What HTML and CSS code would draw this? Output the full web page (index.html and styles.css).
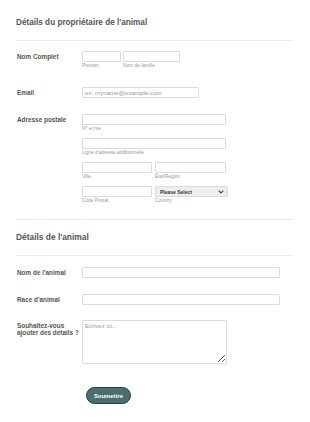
FILE: index.html
```html
<!DOCTYPE html>
<html lang="fr">
<head>
    <meta charset="UTF-8">
    <meta name="viewport" content="width=device-width, initial-scale=1.0">
    <title>Détails de l'animal</title>
    <link rel="stylesheet" href="styles.css">
</head>
<body>
    <form class="form-page">
        <div class="section-head">
            <h2>Détails du propriétaire de l'animal</h2>
        </div>

        <div class="row row-name">
            <label class="field-label">Nom Complet</label>
            <div class="fields">
                <div class="sub sub-first">
                    <input type="text">
                    <span class="sublabel">Prénom</span>
                </div>
                <div class="sub sub-last">
                    <input type="text">
                    <span class="sublabel">Nom de famille</span>
                </div>
            </div>
        </div>

        <div class="row row-email">
            <label class="field-label">Email</label>
            <input type="email" class="input-email" placeholder="ex: myname@example.com">
        </div>

        <div class="row row-address">
            <label class="field-label">Adresse postale</label>
            <div class="address">
                <div class="sub sub-full">
                    <input type="text">
                    <span class="sublabel">N° et rue</span>
                </div>
                <div class="sub sub-full">
                    <input type="text">
                    <span class="sublabel">Ligne d'adresse additionnelle</span>
                </div>
                <div class="fields">
                    <div class="sub sub-half">
                        <input type="text">
                        <span class="sublabel">Ville</span>
                    </div>
                    <div class="sub sub-half2">
                        <input type="text">
                        <span class="sublabel">État/Région</span>
                    </div>
                </div>
                <div class="fields">
                    <div class="sub sub-half">
                        <input type="text">
                        <span class="sublabel">Code Postal</span>
                    </div>
                    <div class="sub sub-select">
                        <div class="select-wrap">
                            <select>
                                <option>Please Select</option>
                            </select>
                            <svg class="chevron" width="6" height="4" viewBox="0 0 6 4">
                                <path d="M0.7 0.7 L3 3 L5.3 0.7" fill="none" stroke="#444" stroke-width="1.2"/>
                            </svg>
                        </div>
                        <span class="sublabel">Country</span>
                    </div>
                </div>
            </div>
        </div>

        <div class="section-head section-animal">
            <h2>Détails de l'animal</h2>
        </div>

        <div class="row row-pet">
            <label class="field-label">Nom de l'animal</label>
            <input type="text" class="input-wide">
        </div>

        <div class="row row-breed">
            <label class="field-label">Race d'animal</label>
            <input type="text" class="input-wide">
        </div>

        <div class="row row-details">
            <label class="field-label label-multi">Souhaitez-vous ajouter des détails ?</label>
            <textarea placeholder="Ecrivez ici..."></textarea>
        </div>

        <div class="row row-submit">
            <button type="submit" class="submit-button">Soumettre</button>
        </div>
    </form>
</body>
</html>
```

FILE: styles.css
```css
body {
    margin: 0;
    font-family: "Liberation Sans", Arial, sans-serif;
    background-color: #fff;
    color: #555;
}
.form-page {
    padding: 0 17px 0 16px;
}
.section-head {
    padding: 18px 0 12px;
    border-bottom: 1px solid #ececec;
}
.section-head h2 {
    margin: 0;
    font-size: 8.2px;
    line-height: 10px;
    font-weight: bold;
    color: #555;
}
.section-animal {
    margin-top: 15px;
    padding-top: 12px;
    padding-bottom: 13px;
    border-top: 1px solid #ececec;
}
.section-animal h2 {
    font-size: 8.4px;
}
.row {
    display: flex;
    align-items: flex-start;
}
.field-label {
    width: 66px;
    flex-shrink: 0;
    padding-left: 1px;
    box-sizing: border-box;
    font-size: 6.4px;
    line-height: 11px;
    font-weight: bold;
    color: #555;
}
.label-multi {
    line-height: 7.2px;
    padding-top: 1.5px;
}
input,
select,
textarea {
    box-sizing: border-box;
    border: 1px solid #dcdcdc;
    border-radius: 1px;
    font-family: "Liberation Sans", Arial, sans-serif;
    background: #fff;
    margin: 0;
    outline: none;
}
input {
    height: 11px;
    padding: 0 2px;
    font-size: 6.2px;
    display: block;
}
input::placeholder,
textarea::placeholder {
    color: #9a9a9a;
}
.fields {
    display: flex;
}
.sub {
    display: flex;
    flex-direction: column;
}
.sublabel {
    margin-top: 1px;
    font-size: 4.8px;
    line-height: 6px;
    color: #999;
    white-space: nowrap;
}
.row-name {
    margin-top: 10px;
}
.sub-first input {
    width: 39px;
}
.sub-last {
    margin-left: 2px;
}
.sub-last input {
    width: 57px;
}
.row-email {
    margin-top: 18px;
}
.input-email {
    width: 117px;
}
.row-address {
    margin-top: 16px;
}
.address .sub,
.address .fields {
    margin-bottom: 6px;
}
.address .fields .sub {
    margin-bottom: 0;
}
.address .fields:last-child {
    margin-bottom: 0;
}
.sub-full input {
    width: 144px;
}
.sub-half input {
    width: 70px;
}
.sub-half2 {
    margin-left: 3px;
}
.sub-half2 input {
    width: 71px;
}
.sub-select {
    margin-left: 3px;
}
.select-wrap {
    position: relative;
}
.select-wrap select {
    display: block;
    width: 73px;
    height: 11px;
    padding: 0 0 0 4px;
    font-size: 5px;
    font-weight: bold;
    color: #333;
    background: #eee;
    appearance: none;
    -webkit-appearance: none;
}
.chevron {
    position: absolute;
    right: 4px;
    top: 4px;
}
.row-pet {
    margin-top: 11px;
}
.input-wide {
    width: 198px;
}
.row-breed {
    margin-top: 16px;
}
.row-details {
    margin-top: 15px;
}
textarea {
    width: 145px;
    height: 44px;
    padding: 2px 2px;
    font-size: 6px;
    resize: vertical;
    display: block;
}
.row-submit {
    margin-top: 23px;
    padding-left: 70px;
}
.submit-button {
    width: 45px;
    height: 17px;
    padding: 0;
    background-color: #4b6d6d;
    color: #fff;
    border: 1px solid #2d3e3e;
    border-radius: 9px;
    font-family: "Liberation Sans", Arial, sans-serif;
    font-size: 5.9px;
    font-weight: bold;
    cursor: pointer;
}
```
